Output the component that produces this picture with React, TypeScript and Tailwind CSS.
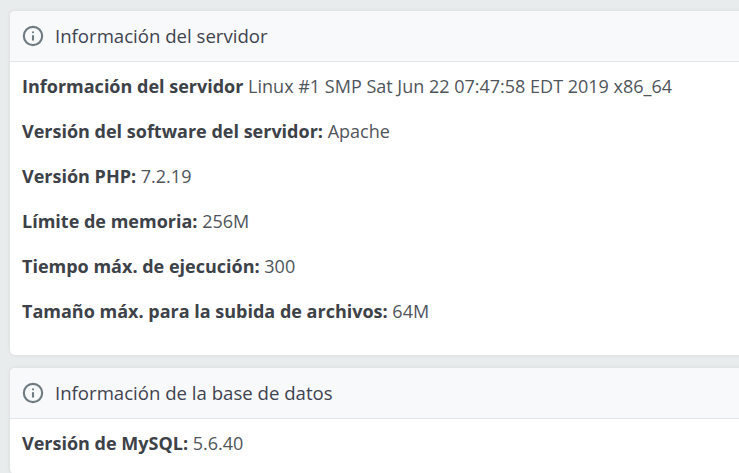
import React from 'react';
import { Info } from 'lucide-react';

function Row({ label, value }: { label: string; value: string }) {
  return (
    <p className="mb-[16px] h-[29px] leading-[29px] whitespace-nowrap">
      <strong className="font-bold text-[#3d4148]">{label}</strong> {value}
    </p>
  );
}

function Card({ title, children }: { title: string; children: React.ReactNode }) {
  return (
    <div className="bg-white rounded-[5px] shadow-[0_0_4px_rgba(0,0,0,0.08)] w-[760px]">
      <div className="h-[51px] flex items-center gap-[11px] pl-[12px] bg-[#f8f9fb] border-b border-[#e1e5ea] rounded-t-[5px] text-[18.6px] text-[#3f4350]">
        <Info size={22} strokeWidth={2.3} className="text-[#6f7b80]" />
        <span>{title}</span>
      </div>
      <div className="pt-[10px] px-[12px]">{children}</div>
    </div>
  );
}

export default function App() {
  return (
    <div className="h-[473px] w-[739px] overflow-hidden bg-[#e9ecec] pt-[11px] pl-[10px] text-[#50555c] text-[18px] font-['Open_Sans',sans-serif]">
      <div className="flex flex-col gap-[13px]">
        <Card title="Información del servidor">
          <div className="pb-[13px]">
            <Row label="Información del servidor" value="Linux #1 SMP Sat Jun 22 07:47:58 EDT 2019 x86_64" />
            <Row label="Versión del software del servidor:" value="Apache" />
            <Row label="Versión PHP:" value="7.2.19" />
            <Row label="Límite de memoria:" value="256M" />
            <Row label="Tiempo máx. de ejecución:" value="300" />
            <Row label="Tamaño máx. para la subida de archivos:" value="64M" />
          </div>
        </Card>
        <Card title="Información de la base de datos">
          <Row label="Versión de MySQL:" value="5.6.40" />
        </Card>
      </div>
    </div>
  );
}
